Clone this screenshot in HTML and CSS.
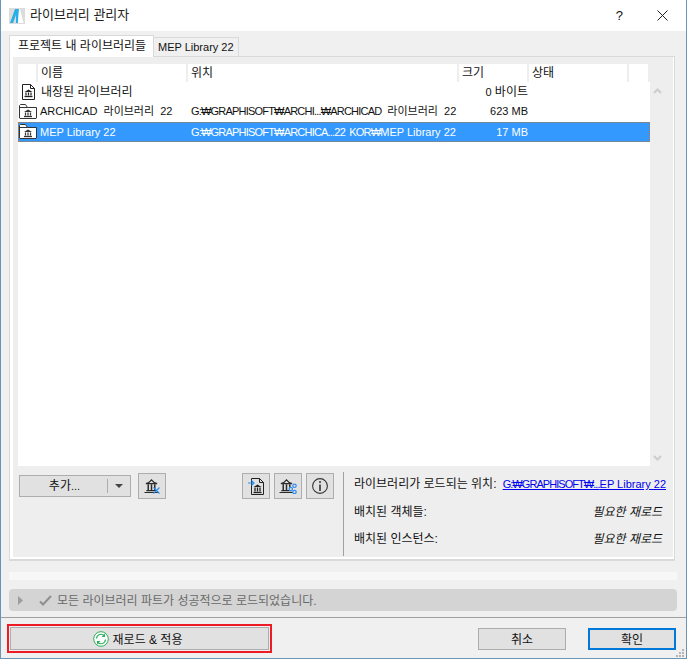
FILE: index.html
```html
<!DOCTYPE html>
<html lang="ko">
<head>
    <meta charset="UTF-8">
    <title>라이브러리 관리자</title>
    <link rel="stylesheet" href="styles.css">
</head>
<body>
    <svg class="defs" width="0" height="0">
        <symbol id="bank" viewBox="0 0 16 15">
            <path d="M2 5Q6 4 8 1q2 3 6 4z" fill="none" stroke="#2b2b2b" stroke-width="1.200"/>
            <path d="M4.500 5.500v6.500M8 5.500v6.500M11.500 5.500v6.500" stroke="#2b2b2b" stroke-width="1.600"/>
            <path d="M2.500 12.500h11M.5 14.400h15" stroke="#2b2b2b" stroke-width="1.200"/>
        </symbol>
        <symbol id="file-bank" viewBox="0 0 13 16">
            <path d="M.5.500h8l4 4v11H.500z" fill="#fff" stroke="#222"/>
            <path d="M8.500.500v4h4" fill="none" stroke="#222"/>
            <path d="M2.500 8 6.500 5.500 10.500 8z" fill="#222"/>
            <path d="M4 8.500v3M6.500 8.500v3M9 8.500v3" stroke="#222" stroke-width="1.200"/>
            <path d="M2.500 12.500h8" stroke="#222" stroke-width="1.300"/>
        </symbol>
        <symbol id="folder-bank" viewBox="0 0 18 15">
            <path d="M.5 14V1.500l1-1h5l2 3h9v10.500l-.5.500H1z" fill="#fff" stroke="#333"/>
            <path d="M.5 3.500h8" fill="none" stroke="#333"/>
            <path d="M5 8 9 5.500 13 8z" fill="#333"/>
            <path d="M6.500 8.500v3M9 8.500v3M11.500 8.500v3" stroke="#333" stroke-width="1.200"/>
            <path d="M5 12.500h8" stroke="#333" stroke-width="1.300"/>
        </symbol>
    </svg>
    <div class="window">
        <header class="titlebar">
            <svg class="app-icon" width="16" height="16" viewBox="0 0 16 16">
                <rect width="16" height="16" fill="#dcdcdc"/>
                <path d="M1 15 6 1h4l-1 14H7V7l-3 8z" fill="#27b0e6"/>
                <path d="M10 1h1l3.500 14H9z" fill="#fff"/>
            </svg>
            <span class="title">라이브러리 관리자</span>
            <span class="help">?</span>
            <svg class="close" width="11" height="11" viewBox="0 0 11 11">
                <path d="M.5.500l10 10M10.500.500l-10 10" stroke="#222" fill="none"/>
            </svg>
        </header>

        <div class="tabs">
            <div class="tab active">프로젝트 내 라이브러리들</div>
            <div class="tab la">MEP Library 22</div>
        </div>

        <section class="panel">
            <div class="list-wrap">
                <div class="list">
                    <div class="row head">
                        <span class="c-icon"></span>
                        <span class="c-name">이름</span>
                        <span class="c-path">위치</span>
                        <span class="c-size">크기</span>
                        <span class="c-state">상태</span>
                        <span class="c-end"></span>
                    </div>
                    <div class="row r1">
                        <span class="c-icon"><svg width="13" height="16"><use href="#file-bank"/></svg></span>
                        <span class="c-name">내장된 라이브러리</span>
                        <span class="c-path"></span>
                        <span class="c-size num"><span class="la">0</span> 바이트</span>
                    </div>
                    <div class="row r2">
                        <span class="c-icon"><svg width="18" height="15"><use href="#folder-bank"/></svg></span>
                        <span class="c-name">ARCHICAD 라이브러리 22</span>
                        <span class="c-path"><span class="tight">G:₩GRAPHISOFT₩ARCHI...₩ARCHICAD</span> 라이브러리 22</span>
                        <span class="c-size num">623 MB</span>
                    </div>
                    <div class="row r3 selected">
                        <span class="c-icon"><svg width="18" height="15"><use href="#folder-bank"/></svg></span>
                        <span class="c-name la">MEP Library 22</span>
                        <span class="c-path la"><span class="tight">G:₩GRAPHISOFT₩ARCHICA...22 KOR₩</span>MEP Library 22</span>
                        <span class="c-size num la">17 MB</span>
                    </div>
                </div>
                <div class="scroll">
                    <svg width="9" height="6" viewBox="0 0 9 6"><path d="M1 5l3.500-3.500L8 5" fill="none" stroke="#ccc" stroke-width="2"/></svg>
                    <svg width="9" height="6" viewBox="0 0 9 6"><path d="M1 1l3.500 3.500L8 1" fill="none" stroke="#ccc" stroke-width="2"/></svg>
                </div>
            </div>

            <div class="tools">
                <div class="tools-left">
                    <div class="split">
                        <span class="split-main">추가<span class="la">...</span></span>
                        <span class="split-arrow"></span>
                    </div>
                    <button class="icon-btn">
                        <svg width="16" height="15" viewBox="0 0 16 15">
                            <use href="#bank" width="15" height="14"/>
                            <path d="M9.500 8.500l6 6M15.500 8.500l-6 6" stroke="#2f8fef" stroke-width="1.200"/>
                        </svg>
                    </button>
                    <span class="spacer"></span>
                    <button class="icon-btn">
                        <svg width="16" height="17" viewBox="0 0 16 17">
                            <path d="M3.500.500h8l4 4v12h-12z" fill="none" stroke="#222"/>
                            <path d="M11.500.500v4h4" fill="none" stroke="#222"/>
                            <path d="M5.500 9 9.500 6.500 13.500 9z" fill="#222"/>
                            <path d="M7 9.500v4M9.500 9.500v4M12 9.500v4" stroke="#222" stroke-width="1.300"/>
                            <path d="M5.500 14.500h8" stroke="#222" stroke-width="1.300"/>
                            <path d="M0 5h5.500M3.500 2.500 6 5 3.500 7.500" fill="none" stroke="#2f8fef" stroke-width="1.200"/>
                        </svg>
                    </button>
                    <button class="icon-btn">
                        <svg width="18" height="15" viewBox="0 0 18 15">
                            <use href="#bank" width="15" height="14"/>
                            <g fill="#e1e1e1" stroke="#2f8fef" stroke-width="1.200">
                                <circle cx="15.500" cy="6.800" r="1.700"/><circle cx="11.800" cy="10" r="1.700"/><circle cx="15.500" cy="13" r="1.700"/>
                            </g>
                        </svg>
                    </button>
                    <button class="icon-btn">
                        <svg width="16" height="16" viewBox="0 0 16 16">
                            <circle cx="8" cy="8" r="7.400" fill="none" stroke="#333" stroke-width="1.100"/>
                            <path d="M8 6.500V13" stroke="#333" stroke-width="1.600"/>
                            <circle cx="8" cy="4" r="1" fill="#333"/>
                        </svg>
                    </button>
                </div>
                <div class="info">
                    <div class="info-row">
                        <span>라이브러리가 로드되는 위치:</span>
                        <a class="link la" href="#"><span class="tight">G:₩GRAPHISOFT₩...</span>EP Library 22</a>
                    </div>
                    <div class="info-row">
                        <span>배치된 객체들:</span>
                        <em>필요한 재로드</em>
                    </div>
                    <div class="info-row">
                        <span>배치된 인스턴스:</span>
                        <em>필요한 재로드</em>
                    </div>
                </div>
            </div>
        </section>

        <div class="progress"></div>

        <div class="status">
            <svg class="tri" width="5" height="9" viewBox="0 0 5 9"><path d="M0 0l5 4.500L0 9z" fill="#9d9d9d"/></svg>
            <svg class="check" width="13" height="11" viewBox="0 0 13 11"><path d="M1 6.500l3 3L12 1" fill="none" stroke="#8f8f8f" stroke-width="2"/></svg>
            <span class="status-text">모든 라이브러리 파트가 성공적으로 로드되었습니다.</span>
        </div>

        <footer class="footer">
            <div class="red-frame">
                <button class="btn reload">
                    <svg width="16" height="16" viewBox="0 0 16 16">
                        <circle cx="8" cy="8" r="7.300" fill="#fff" stroke="#2fae5a"/>
                        <path d="M3.500 7.500A4.500 4.500 0 0 1 11.500 5M12.500 8.500A4.500 4.500 0 0 1 4.500 11" fill="none" stroke="#2fae5a" stroke-width="1.200"/>
                        <path d="M12 2.500v3.500H8.500zM4 13.500V10h3.500z" fill="#2fae5a"/>
                    </svg>
                    <span class="reload-text">재로드 &amp; 적용</span>
                </button>
            </div>
            <span class="spacer"></span>
            <button class="btn cancel">취소</button>
            <button class="btn ok">확인</button>
            <svg class="grip" width="8" height="8" viewBox="0 0 8 8">
                <path d="M6 0h2v2H6zM3 3h2v2H3zM6 3h2v2H6zM0 6h2v2H0zM3 6h2v2H3zM6 6h2v2H6z" fill="#b5b5b5"/>
            </svg>
        </footer>
    </div>
</body>
</html>
```

FILE: styles.css
```css
* {
    box-sizing: border-box;
}
html, body {
    margin: 0;
    height: 100%;
}
body {
    font-family: "Liberation Sans", "Noto Sans CJK KR", sans-serif;
    font-size: 12px;
    color: #111;
    background: #f0f0f0;
}
.la {
    font-size: 11px;
}
.tight {
    font-size: 11px;
    letter-spacing: -0.8px;
    word-spacing: 2px;
}
.link .tight {
    letter-spacing: -0.95px;
}
.defs {
    position: absolute;
}
button {
    font: inherit;
    color: inherit;
    padding: 0;
}
.window {
    position: relative;
    width: 687px;
    height: 659px;
    display: flex;
    flex-direction: column;
    background: #f0f0f0;
    border: 1px solid #6f93b3;
    border-top: 0;
}
.titlebar {
    height: 31px;
    flex: none;
    display: flex;
    align-items: center;
    background: #fff;
    padding: 0 18px 0 8px;
}
.app-icon {
    margin-right: 5px;
}
.title {
    font-size: 13px;
    line-height: 16px;
    margin-top: -1px;
    color: #222;
    flex: 1;
}
.help {
    font-size: 13px;
    margin-right: 34px;
}
.tabs {
    height: 25px;
    flex: none;
    display: flex;
    align-items: flex-end;
    padding-left: 8px;
    position: relative;
    z-index: 1;
}
.tab {
    height: 19px;
    line-height: 18px;
    padding: 0 4px;
    width: 85px;
    background: #f0f0f0;
    border: 1px solid #d9d9d9;
    border-bottom: 0;
    border-left: 0;
    white-space: nowrap;
}
.tab.active {
    width: 145px;
    height: 22px;
    line-height: 20px;
    padding-left: 8px;
    background: #fff;
    border-left: 1px solid #d9d9d9;
    margin-bottom: -1px;
}
.panel {
    height: 505px;
    flex: none;
    margin: 0 11px 0 8px;
    border: 1px solid #d9d9d9;
    border-width: 1px 1px 2px;
    background: #eee;
    box-shadow: inset 3px 0 0 #fff, inset -1px 0 0 #fff, inset 0 -2px 0 #fff;
    padding: 7px 9px 0 8px;
}
.list-wrap {
    display: flex;
    height: 402px;
}
.list {
    width: 632px;
    background: #fff;
}
.row {
    display: flex;
    align-items: center;
    white-space: nowrap;
    height: 20px;
    line-height: 16px;
}
.head {
    height: 18px;
}
.head span {
    height: 100%;
    padding-top: 1px;
    border-right: 2px solid #eee;
}
.r1 {
    height: 19px;
}
.r2 {
    height: 21px;
    font-size: 11px;
    word-spacing: 3px;
    padding-bottom: 1px;
}
.r3 {
    padding-bottom: 1px;
}
.selected {
    background: #3399ff;
    color: #fff;
    outline: 1px dotted #b5793a;
    outline-offset: -1px;
}
.c-icon {
    width: 20px;
    flex: none;
    padding-left: 1px;
    display: flex;
    align-items: center;
}
.c-icon svg {
    flex: none;
}
.r1 .c-icon {
    padding-left: 4px;
}
.c-name {
    width: 150px;
    flex: none;
    padding-left: 3px;
}
.r2 .c-name, .r3 .c-name {
    padding-left: 2px;
}
.c-path {
    width: 271px;
    flex: none;
    padding-left: 3px;
}
.c-size {
    width: 70px;
    flex: none;
    padding-left: 3px;
}
.num {
    text-align: right;
    padding-right: 1px;
    word-spacing: 0;
}
.c-state {
    width: 100px;
    flex: none;
    padding-left: 3px;
}
.c-end {
    width: 21px;
    flex: none;
}
.scroll {
    width: 16px;
    display: flex;
    flex-direction: column;
    justify-content: space-between;
    align-items: center;
    padding: 24px 0 5px;
}
.tools {
    display: flex;
    margin-top: 6px;
}
.tools-left {
    width: 325px;
    flex: none;
    display: flex;
    align-items: flex-start;
    padding-top: 1px;
}
.split {
    width: 112px;
    height: 22px;
    margin: 2px 7px 0 1px;
    display: flex;
    align-items: center;
    background: #e1e1e1;
    border: 1px solid #adadad;
}
.split-main {
    flex: 1;
    text-align: center;
    line-height: 14px;
    border-right: 1px solid #adadad;
    padding-left: 2px;
}
.split-arrow {
    width: 22px;
    height: 4px;
    position: relative;
}
.split-arrow::after {
    content: "";
    position: absolute;
    left: 7px;
    top: 0;
    border: 4px solid transparent;
    border-top: 4px solid #444;
    border-bottom: 0;
}
.icon-btn {
    width: 28px;
    height: 26px;
    margin-right: 4px;
    display: flex;
    align-items: center;
    justify-content: center;
    background: #e1e1e1;
    border: 1px solid #adadad;
}
.spacer {
    flex: 1;
}
.icon-btn:last-child {
    margin-right: 9px;
}
.info {
    flex: 1;
    min-width: 0;
    height: 84px;
    border-left: 1px solid #a0a0a0;
    padding: 1px 3px 0 10px;
}
.info-row {
    display: flex;
    justify-content: space-between;
    white-space: nowrap;
    height: 27.500px;
    line-height: 22px;
}
.link {
    color: #0000ee;
    margin-right: -4px;
}
.progress {
    height: 8px;
    flex: none;
    margin: 11px 9px 0 8px;
    background: #f7f7f7;
}
.status {
    height: 22px;
    flex: none;
    margin: 9px 9px 0 8px;
    display: flex;
    align-items: center;
    background: #d4d4d4;
    border-radius: 4px;
    color: #6a6a6a;
    padding-left: 9px;
}
.status-text {
    margin-top: -2px;
}
.tri {
    margin-right: 16px;
}
.check {
    margin-right: 5px;
}
.footer {
    flex: none;
    height: 41px;
    margin-top: 6px;
    border-top: 1px solid #a0a0a0;
    display: flex;
    align-items: flex-start;
    position: relative;
    padding: 6px 10px 0 6px;
}
.red-frame {
    width: 265px;
    height: 29px;
    border: 2px solid #ed1c24;
    padding: 1px;
}
.btn {
    height: 22px;
    background: #e1e1e1;
    border: 1px solid #adadad;
}
.reload {
    width: 100%;
    height: 23px;
    display: flex;
    align-items: center;
    justify-content: center;
    gap: 4px;
    padding-right: 4px;
}
.reload-text {
    margin-top: -1px;
}
.cancel, .ok {
    width: 88px;
    margin-top: 4px;
    margin-left: 22px;
    padding-bottom: 2px;
}
.ok {
    border: 2px solid #0078d7;
}
.grip {
    position: absolute;
    right: 2px;
    bottom: 1px;
}
```
